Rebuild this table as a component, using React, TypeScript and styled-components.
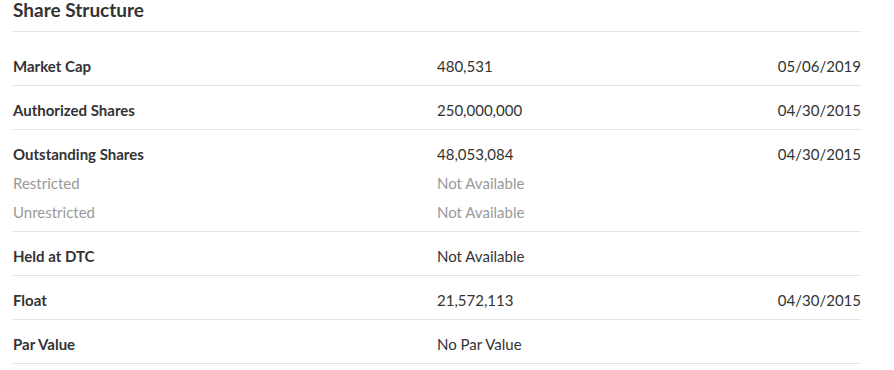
import React from "react";
import styled, { createGlobalStyle } from "styled-components";

const Global = createGlobalStyle`
  body { margin: 0; background: #fff; font-family: Lato, "Open Sans", sans-serif; color: #333; }
`;

const Wrap = styled.section`
  width: 848px;
  margin-left: 13px;
`;

const Title = styled.h2`
  margin: 0 0 10px;
  font-size: 19px;
  line-height: 20px;
  font-weight: 700;
  color: #333;
  padding-bottom: 11px;
  border-bottom: 1px solid #e2e2e2;
`;

const Row = styled.div`
  display: grid;
  grid-template-columns: 424px 1fr 200px;
  padding: 14px 0 9px;
  border-bottom: 1px solid #e2e2e2;
  font-size: 15px;
  line-height: 20px;
`;

const Col = styled.div<{ $right?: boolean }>`
  display: flex;
  flex-direction: column;
  gap: 9px;
  text-align: ${(p) => (p.$right ? "right" : "left")};
`;

const Label = styled.span<{ $sub?: boolean }>`
  font-weight: ${(p) => (p.$sub ? 400 : 700)};
  color: ${(p) => (p.$sub ? "#999" : "#333")};
`;

const Value = styled.span<{ $sub?: boolean }>`
  color: ${(p) => (p.$sub ? "#999" : "#333")};
`;

type Item = { label: string; value: string; date?: string; subs?: [string, string][] };

const items: Item[] = [
  { label: "Market Cap", value: "480,531", date: "05/06/2019" },
  { label: "Authorized Shares", value: "250,000,000", date: "04/30/2015" },
  {
    label: "Outstanding Shares",
    value: "48,053,084",
    date: "04/30/2015",
    subs: [
      ["Restricted", "Not Available"],
      ["Unrestricted", "Not Available"],
    ],
  },
  { label: "Held at DTC", value: "Not Available" },
  { label: "Float", value: "21,572,113", date: "04/30/2015" },
  { label: "Par Value", value: "No Par Value" },
];

export default function App() {
  return (
    <>
      <Global />
      <Wrap>
        <Title>Share Structure</Title>
        {items.map((it) => (
          <Row key={it.label}>
            <Col>
              <Label>{it.label}</Label>
              {it.subs?.map(([l]) => (
                <Label $sub key={l}>{l}</Label>
              ))}
            </Col>
            <Col>
              <Value>{it.value}</Value>
              {it.subs?.map(([l, v]) => (
                <Value $sub key={l}>{v}</Value>
              ))}
            </Col>
            <Col $right>
              <Value>{it.date ?? ""}</Value>
            </Col>
          </Row>
        ))}
      </Wrap>
    </>
  );
}
